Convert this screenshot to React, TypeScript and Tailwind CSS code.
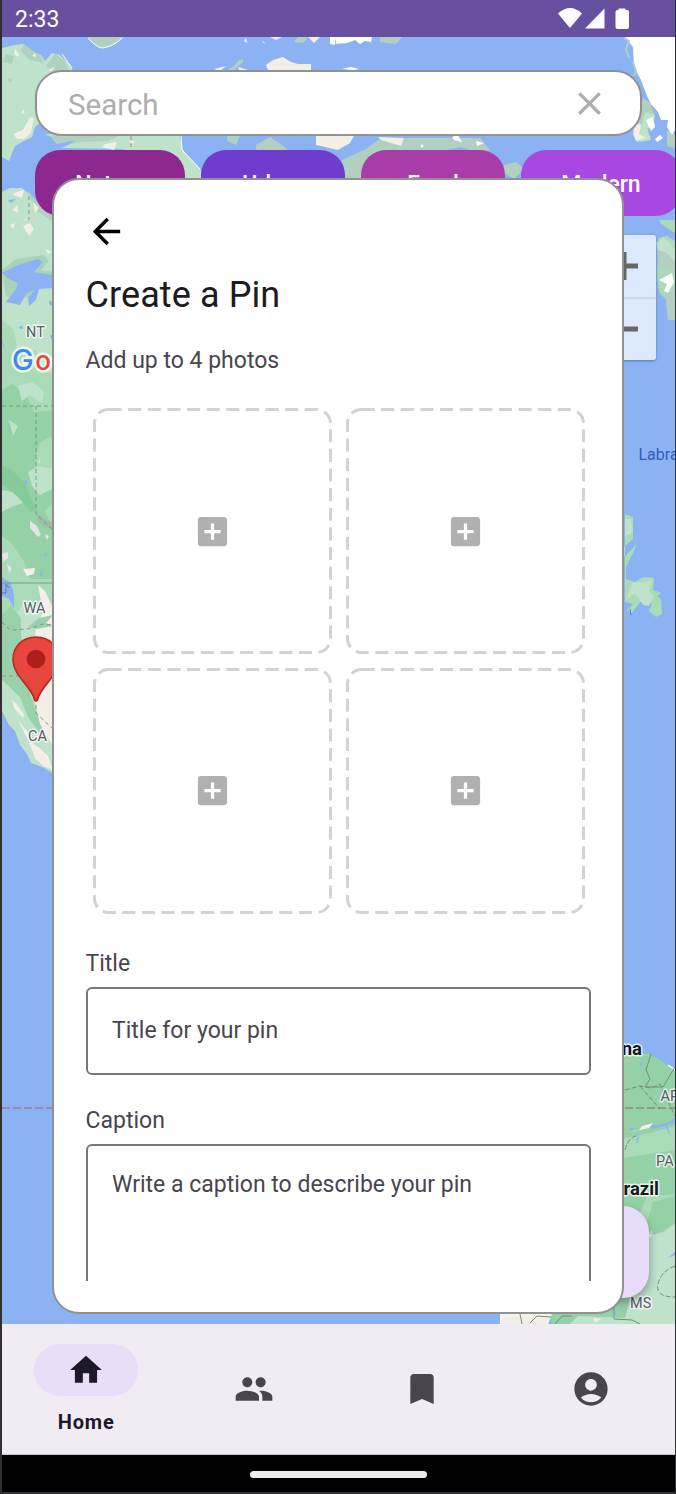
import React from "react";
import { MdArrowBack, MdAddBox, MdHome, MdPeople, MdBookmark, MdAccountCircle, MdClose } from "react-icons/md";

const chips = [
  { label: "Nature", style: "w-[150px] bg-[#8d2891]" },
  { label: "Urban", style: "w-[144px] bg-[#703ccf]" },
  { label: "Food", style: "w-[144px] bg-[#aa3ca9]" },
  { label: "Modern", style: "w-[160px] bg-[#a848e1]" },
];

function StatusBar() {
  return (
    <header className="flex h-[37px] shrink-0 items-center justify-between bg-[#67509f] pl-[13px] pr-[46px] text-white">
      <span className="pt-px text-[23px] leading-none">2:33</span>
      <svg className="h-[22px] w-[72px]" viewBox="557 7 72 22" fill="#fff">
        <path d="M558 12.500Q570 1.500 582 12.500L570 27Z" />
        <path d="M604.500 7.500V27.500H585Z" />
        <path d="M618.500 7.500h7v1.500h1.500q2 0 2 2v15q0 2-2 2h-9.500q-2 0-2-2V11q0-2 2-2h1z" />
      </svg>
    </header>
  );
}

function MapBackdrop() {
  return (
    <svg className="absolute inset-0 h-full w-full" viewBox="2 37 673 1287" preserveAspectRatio="none">
      <path fill="#8bb3f4" d="M2 37h673v1287H2z" />

      <g fill="#bfe2ca">
        <path d="M2 48l12-3 10-1 8 7 9 4 4 6 7-8 8 2 8 8 7 10v30l-30 16-10 8-3 10-8 4-9 5-6 15-7-4z" />
        <path d="M45 134h134l4 16 18 20v15H180l-20-30-40-6-60-1 16-6-20-3z" />
        <path d="M2 192l8-4h12l10 8 8 10 13 9v95H2z" />
      </g>
      <g fill="#b2d0bf">
        <path d="M88 37h36q-14 12-22 11-8-2-14-11zM24 44l9 7 8 5 3 7-14-3-9-9zM55 54l9 6 5 10-15 4-8-8zM52 135h68l-12 6-27 1-23 3-5-5zM6 54l8 2-2 8-9-2zM9 78l3 2-2 3-2-3zM28 190l12 17 13 7v8l-18-13z" />
        <path d="M228 70l6-4 4-5 5-2v3l-9 8zM256 145l14-8 12 8 6 5h-32zM227 136h13l-4 9-9-4zM298 37h10l-5 6-9-1zM380 37h22l-6 7-16-2zM345 180l-3-20 24-11 15-11h82l17 0 10 12-14 2-15-5-40 8-30 5-15 18z" />
        <path d="M504 165l12-3 8 7-10 10-13-8zM643 98l7 5 5 12-8 18-10-4-3-10 5-4zM667 130l8 4v14l-8-2z" />
      </g>
      <path fill="#bfe2ca" d="M645 112l10 3-3 13-11 0zM637 122l10 6 4 12-14 2-3-11zM5 226l10 4-3 7-7-1zM20 232l6 3-4 8z" />
      <g fill="#f3efe6">
        <path d="M15 49l4 5-1 3-4-3zM32 56l3-3 1 4zM48 70l7-3-3 4zM21 112l3-3v5zM30 117l4 1-3 15-7 6h-7l-4-5 10-4z" />
        <path d="M266 65l7-5 10-3 8 5 7 2 13 0v6h-43zM270 37h12l-6 3zM308 37h12l-6 6zM316 136h38l-4 7-12 7-22-5zM378 137l26 1-3 8-20-6zM214 69l12-3-6 5zM238 67l10 3h-9zM105 144l12-2-3 8-12-3zM129 141l6 0-3 4zM14 193l10-3-2 8-9-3zM12 210l6-5v8zM25 218l5 5v9l-6-7zM33 202l6 6-4 5z" />
        <path d="M635 122l6 3-2 9 7 4-10 3-3-7z" />
      </g>
      <g fill="#fff">
        <path d="M336 37h36l-1 5-6-1-5 3-5-4-8 3-11 1zM330 37h6l-1 8-5-1zM625 37h50v93l-3 5-5-8 1-7-7 0-3-8-7-8-4-8-6-16-7-13-1-20zM646 120l7-3 2 10-4 4zM655 139l5-4 3 3-6 4zM244 41l2-3 1 5zM262 41l2 1 1 2zM342 69l9-2 8 2-5 1z" />
        <path d="M452 137l6-2 4 7-8-2zM476 141l8 2-7 3zM421 144l3 2-3 2z" />
      </g>
      <path fill="none" stroke="#b2d0bf" strokeWidth="2" d="M624 38l5 3-3 8 3 9M633 62l3 9-2 5" />
      <path fill="none" stroke="#fff" strokeWidth="1" d="M72 68l-10-14M181 136l1 14 18 19M88 38q8 9 14 10 11-1 20-10" />
      <path fill="#8bb3f4" d="M52 145l24-5-16 9-8 1zM8 200l8-1-5 4zM38 218l2 7-2 4zM366 138l5 3-5 5z" />
      <path fill="none" stroke="#8f8f8f" strokeWidth="1" strokeDasharray="4 3" d="M29 196v40l24 18M131 136v12" />

      <path fill="#bfe2ca" d="M2 220h51v364H2z" />
      <path fill="#a9dbb9" d="M2 320l12 10 4 22 18-2 6 20 11 4v246H2z" />
      <path fill="#94d1a6" d="M2 390l10-6 14 10 8 18 19-2v25l-14 8-5 25 8 14 11 1v20l-8 8 8 18v50H30l-6-18-12-17-10-8z" />
      <path fill="#bfe2ca" d="M18 386l14-4 12 9-2 12-12-8-8 6zM28 472l10-6 15 3v20l-14 6-7-9zM2 490l16 3 5 10-12 4-9 5zM9 420l9 6-5 10z" />
      <path fill="#86c99b" d="M2 466l10 4 12 12 12 27-5 3-14-16-15-12z" />
      <path fill="#a9d3b9" d="M2 270l14-11 28-4 5 6-8 9 12 2v6l-17 2-5 17-11 2-14-3z" />
      <path fill="#8bb3f4" d="M2 273l16-8 20-6 5 3-9 10 19 3v13l-14 1-3 11-7 6-1-8 6-8-8 4-6 11-14-3 10-13 2-6-9-4zM49 300l4 3v4l-4-3zM18 328l4-3 1 4zM50 336l3-2v7zM2 340l4 12-3-6zM25 480l3 1-3 5-1-3zM44 554l3-1-1 4zM41 569l2 5-3 4zM2 577l9 6 3 12 0 13-5-9-7-3z" />
      <path fill="#f3efe6" d="M23 226l7-3 4 6-5 7zM45 249l7 3-4 2zM10 225l5-2-2 6z" />
      <g fill="#e5e5e5">
        <path d="M30 521l7 5 4 9-3 2-8-9zM45 534l4 2-2 4zM2 554l6-2v6l-5 4zM38 464l2-7v5zM33 483l4 2-3 2zM7 564l5 4-3 5z" />
      </g>
      <path fill="#a3bba9" d="M38 514l6 5 9 3v7l-8-2-8-7z" />
      <path fill="none" stroke="#68a07c" strokeWidth="1" strokeDasharray="4 3" d="M2 406h51M36 406v108l17 16" />
      <path fill="none" stroke="#709f82" strokeWidth="1" d="M2 583h51" />
      <path fill="#bfe2ca" d="M2 620l16-8 7-12 11 3 17 27v143l-11-6-11-4-4-9-7-9-5-14-6-6-7-14z" />
      <path fill="#99d2aa" d="M2 614l9-8 10 12 0 18 7 20-7 10 15 45 9 25-7-5-10-14-8-20-18-17z" />
      <path fill="#f3efe6" d="M38 585l7 6 8 17v138l-13-22-4-18-7-20-11-31 9-11 8-7 1-10 7-15zM12 700l5 4 7 11-1 3-9-10zM18 720l8 10 5 12 10 7 7 7 5 14-10-4-8-8-7-18zM23 569l12-1-1 6-7 2z" />
      <path fill="#99d2aa" d="M28 627l11-9 14-3-7 8 7 3-16 3z" />
      <path fill="none" stroke="#8f8f8f" strokeWidth="1" strokeDasharray="4 3" d="M2 622l8 8 18-1 15-5 10 1M2 676h34v37l17 16" />
      <path fill="none" stroke="#5c7ba0" strokeWidth="1" d="M2 593h4v-9l3 4" />
      <path fill="#d93932" stroke="#b72a28" strokeWidth="1.500" d="M36 637c-14 0-23 10-23 22 0 18 18 26 21.500 41q1.500 2 3 0C41 685 59 677 59 659c0-12-9-22-23-22z" />
      <path fill="#e7473c" d="M36 638c-13 0-22 10-22 21 0 18 18 25 22 40 4-15 22-22 22-40 0-11-9-21-22-21z" />
      <circle cx="36" cy="659" r="9.300" fill="#b01e1b" />

      <path fill="#a9dbb9" d="M660 220h15v96h-7v-14l-9-10-2-16 1-34z" />
      <path fill="#8bb3f4" d="M655 219l8 6 12 8v8l-8-5-9 2z" />
      <path fill="#bfe2ca" d="M656 243l8-6 7 7 4 6v12l-15-3z" />
      <path fill="#fff" d="M659 280l13-7 2 9-6 11-4-2 3-7z" />
      <path fill="#b2d0bf" d="M657 250l9 2 9 10v10l-16-7zM665 291l5 4 5-7v32l-7 0z" />
      <path fill="#a9dbb9" d="M625 514l8 3v22l-9 8v10l12-12-2 6-8 16v12l9 3 8-5 11 1-1 12 9 3-5 3 4 3 1 15-6 3-7-6 3-8-11-2-9 12-5-3 6-6-8-2z" />
      <path fill="#bfe2ca" d="M625 519l6 0 2 13-8 4zM632 583l20-2-3 10 5 5-5 10-6-1-8-12-9 7z" />
      <path fill="none" stroke="#607d95" strokeWidth="1" d="M630 609l1 6" />

      <path fill="#94d1a6" d="M624 1053l13 0 12 1 13 7 13 10v253H552l-3-10 75-20z" />
      <path fill="none" stroke="#fff" strokeWidth="1.500" d="M668 1065l7 5" />
      <path fill="#a9dbb9" d="M624 1138l26-5 25-7v70l-22 6-10 33-19-8z" />
      <path fill="#94d1a6" d="M624 1158l51-8v44l-28 2-11 26-12-14z" />
      <path fill="#bfe2ca" d="M675 1205v119H570l8-8 47 2 20-80 13-16z" />
      <path fill="#94d1a6" d="M650 1220l13-14 12-5v22l-12 9-10 3z" />
      <path fill="#f8f5f0" d="M500 1324v-10h52l-4 10z" />
      <path fill="#f3efe6" d="M500 1324l3-6 12-2h35l-5 8zM635 1131l14-3 4-5-11 3-3 4-13 2zM593 1318l8 1-6 4zM649 1234l4 1-4 3z" />
      <path fill="none" stroke="#6d8f7a" strokeWidth="1" strokeDasharray="5 2" d="M625 1090l15-4 11 2 9-4 15 32M640 1086l20 23M625 1150q4-14 12-14M675 1266q-14 5-17 18t17 13" />
      <path fill="none" stroke="#6d8f7a" strokeWidth="1" d="M651 1054l-5 16 4 9-5 8 18 0 12-20M614 1319l18 1 8 4M520 1314l2 10M530 1323l7-7 14 1M555 1324l7-8h10" />
      <path fill="none" stroke="#5d8fd0" strokeWidth="1" d="M614 1304v15" />
      <path fill="#8bb3f4" d="M630 1128l6 0-6 3zM651 1126l16-3 8-5v5l-8 2 4 12-6-11-14 3zM639 1130l-3 13 2 0zM639 1064l3-2-1 5zM668 1258l7-6v3z" />
      <path fill="none" stroke="#a3616b" strokeWidth="1" strokeDasharray="8 3" d="M2 1108h51M625 1108h50" />

      <g stroke="#fff" strokeOpacity=".75" strokeWidth="3" strokeLinejoin="round" paintOrder="stroke" fontFamily="Roboto, sans-serif" fontSize="14.500" fill="#555c62">
        <text x="26" y="337">NT</text>
        <text x="23.500" y="613">WA</text>
        <text x="28" y="741">CA</text>
        <text x="660.500" y="1101">AP</text>
        <text x="656" y="1166">PA</text>
        <text x="630" y="1308">MS</text>
        <g fontSize="18.500" fontWeight="700" fill="#17191a">
          <text x="642" y="1055" textAnchor="end">Guyana</text>
          <text x="659" y="1195" textAnchor="end">Brazil</text>
        </g>
        <g fontFamily="Inter, sans-serif" fontSize="29" fontWeight="500" strokeWidth="5">
          <text x="12" y="370" fill="#4285f4">G</text>
          <text x="51.500" y="370" fontSize="26" fill="#fbbc05">o</text>
          <text x="35.200" y="370" fontSize="26" fill="#ea4335">o</text>
        </g>
      </g>
      <text x="638.500" y="460" fontFamily="Roboto, sans-serif" fontSize="16" fill="#315eb5">Labrador</text>
    </svg>
  );
}

function ZoomControls() {
  return (
    <div className="absolute right-[19px] top-[198px] flex h-[125px] w-[62px] flex-col rounded-[3px] bg-white/70 pr-[2px] shadow-[0_1px_3px_#0005]">
      <div className="-mr-[2px] flex flex-1 items-center justify-center border-b-2 border-[#c9d6e9] pr-[2px]">
        <svg viewBox="0 0 28 28" className="h-7 w-7"><path d="M0 14h28M14 0v28" stroke="#666" strokeWidth="5" /></svg>
      </div>
      <div className="flex flex-1 items-center justify-center">
        <svg viewBox="0 0 28 28" className="h-7 w-7"><path d="M0 14h28" stroke="#666" strokeWidth="5" /></svg>
      </div>
    </div>
  );
}

function PhotoSlot() {
  return (
    <button className="relative flex h-[246px] w-[239px] items-center justify-center">
      <svg className="absolute inset-0 h-full w-full" viewBox="0 0 239 246" fill="none">
        <rect x="1.500" y="1.500" width="236" height="243" rx="14" stroke="#d3d3d3" strokeWidth="3" strokeDasharray="13.100 6.530" />
      </svg>
      <MdAddBox className="size-[39px] text-[#b0b0b0]" />
    </button>
  );
}

function PinDialog() {
  return (
    <section className="absolute left-[50px] top-[141px] h-[1136px] w-[572px] overflow-hidden rounded-[27px] border-2 border-[#919191] bg-white pb-8 pl-[31.500px] pr-[31px]">
      <div className="flex h-[1101px] flex-col overflow-hidden text-[#49454f]">
        <button className="mt-[31px] flex h-10 w-[41px] items-center justify-center text-black">
          <MdArrowBack className="size-[41px] shrink-0" />
        </button>
        <h1 className="mt-[20px] text-[36px] leading-[48px] tracking-[0.1px] text-[#1c1b1f]">Create a Pin</h1>
        <p className="mt-[26px] text-[23px] leading-[32px]">Add up to 4 photos</p>
        <div className="ml-[7.500px] mt-[31px] grid w-[492px] grid-cols-2 gap-x-[14px] gap-y-[13.500px]">
          <PhotoSlot />
          <PhotoSlot />
          <PhotoSlot />
          <PhotoSlot />
        </div>
        <label className="mt-[34.500px] text-[23px] leading-[32px]">Title</label>
        <div className="mt-[7px] flex h-[88px] shrink-0 items-center rounded-[6px] border-2 border-[#79747e] px-[24.500px] text-[23px]">
          Title for your pin
        </div>
        <label className="mt-[29.500px] text-[23px] leading-[32px]">Caption</label>
        <div className="mt-[7px] h-[220px] shrink-0 rounded-[6px] border-2 border-[#79747e] px-[24.500px] pt-[23.500px] text-[23px] leading-[32px]">
          Write a caption to describe your pin
        </div>
      </div>
    </section>
  );
}

function BottomNav() {
  return (
    <nav className="grid h-[131px] shrink-0 grid-cols-4 border-b border-[#c9c5cc] bg-[#f1ecf4] text-[#49454f]">
      <a className="flex flex-col items-center pt-5 text-[#1d192b]">
        <span className="flex h-[52px] w-[104px] items-center justify-center rounded-full bg-[#e8def8]">
          <MdHome className="size-[38px]" />
        </span>
        <span className="mt-[12px] text-[20px] font-bold leading-[28px] tracking-[0.8px]">Home</span>
      </a>
      <a className="flex items-center justify-center"><MdPeople className="size-10" /></a>
      <a className="flex items-center justify-center pr-px"><MdBookmark className="size-10" /></a>
      <a className="flex items-center justify-center"><MdAccountCircle className="size-10" /></a>
    </nav>
  );
}

export default function App() {
  return (
    <div className="flex h-[1494px] w-[676px] flex-col overflow-hidden border-b-2 border-l-2 border-r border-[#303033] bg-black font-['Roboto',sans-serif]">
      <StatusBar />
      <main className="relative h-[1287px] shrink-0 overflow-hidden">
        <MapBackdrop />
        <ZoomControls />
        <div className="relative ml-[33px] mt-[33px] flex h-[66px] w-[607px] items-center justify-between rounded-[27px] border-2 border-[#919191] bg-white pl-[31px] pr-[31px] text-[#adadad]">
          <span className="pt-[4px] text-[29.500px]">Search</span>
          <MdClose className="size-[39px]" />
        </div>
        <div className="relative ml-[33px] mt-[14px] flex gap-4">
          {chips.map(({ label, style }) => (
            <div key={label} className={`flex h-[66px] shrink-0 items-center justify-center rounded-[25px] pt-[4px] text-[23px] font-medium text-white ${style}`}>
              {label}
            </div>
          ))}
        </div>
        <div className="absolute bottom-[26px] right-[26px] size-[92px] rounded-[26px] bg-[#e8dcfd] shadow-[0_4px_10px_#0005]" />
        <PinDialog />
      </main>
      <BottomNav />
      <footer className="flex flex-1 items-center justify-center pt-px">
        <div className="h-[7px] w-[177px] rounded-full bg-[#ececec]" />
      </footer>
    </div>
  );
}
